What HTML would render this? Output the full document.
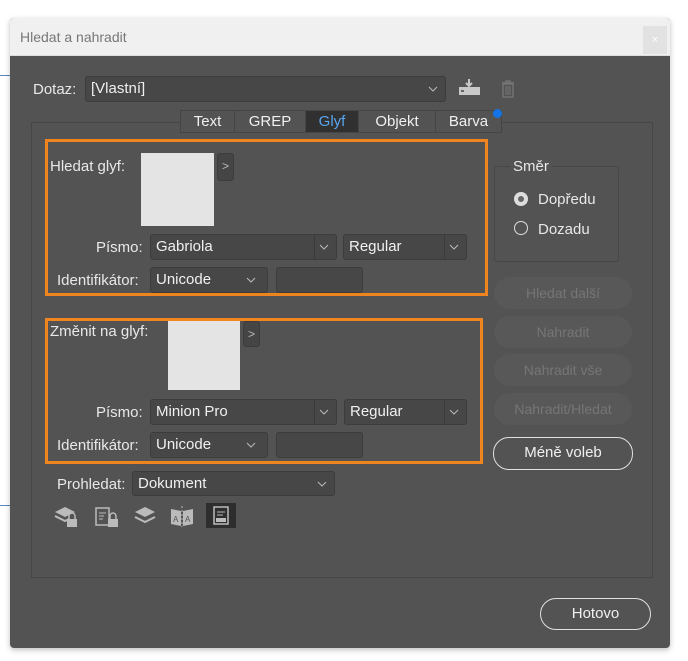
<!DOCTYPE html>
<html><head><meta charset="utf-8"><style>
*{box-sizing:border-box;margin:0;padding:0}
body{width:688px;height:661px;background:#fff;position:relative;overflow:hidden;font-family:"Liberation Sans",sans-serif;font-size:15px;color:#e8e8e8}
.a{position:absolute}
.dlg{left:10px;top:18px;width:660px;height:630px;background:#535353;border-radius:4px;box-shadow:0 2px 6px rgba(0,0,0,.25);overflow:hidden}
.title{left:0;top:0;width:660px;height:38px;background:#f0f0f0;color:#777;font-size:14px;line-height:38px;padding-left:10px;border-bottom:1px solid #ddd}
.lbl{white-space:nowrap;line-height:16px}
.dd{background:#474747;border:1px solid #3c3c3c;border-radius:3px;line-height:24px;padding-left:5px;color:#f0f0f0}
.dd .ch{position:absolute;right:7px;top:9px;width:10px;height:6px}
.div{position:absolute;top:0;bottom:0;width:1px;background:#3a3a3a}
.glyph{background:#e4e4e4}
.arr{background:#454545;border:1px solid #3c3c3c;border-radius:3px;color:#bbb;font-size:12px;text-align:center;line-height:24px}
.ob{border:3px solid #f0851f}
.btn{border-radius:16px;background:#585858;color:#767676;text-align:center;line-height:32px;font-size:14px}
.tab{top:110px;height:23px;border:1px solid #454545;background:#535353;text-align:center;line-height:22px;color:#f0f0f0}
</style></head><body>
<div class="a" style="left:0;top:75px;width:10px;height:1px;background:#5b86b8"></div>
<div class="a" style="left:0;top:505px;width:10px;height:1px;background:#5b86b8"></div>
<div class="a dlg">
<div class="a title">Hledat a nahradit</div>
<div class="a" style="left:633px;top:8px;width:24px;height:28px;background:#e2e2e2;color:#fff;font-size:11px;text-align:center;line-height:28px">×</div>
</div>
<div class="a lbl" style="left:33px;top:82px">Dotaz:</div>
<div class="a dd" style="left:85px;top:76px;width:361px;height:26px">[Vlastní]<svg class="ch" viewBox="0 0 10 6"><path d="M1 1l4 4 4-4" stroke="#bbb" fill="none"/></svg></div>
<svg class="a" style="left:458px;top:77px" width="24" height="22"><rect x="1" y="10" width="21" height="8" fill="#c8c8c8"/><rect x="3" y="13" width="3" height="2" fill="#666"/><path d="M11 2v7M8 6l3 3 3-3" stroke="#c8c8c8" stroke-width="2" fill="none"/></svg>
<svg class="a" style="left:500px;top:79px" width="16" height="20"><path d="M2 4h12M6 4V2h4v2M3 5h10v13H3z" stroke="#777" stroke-width="1.3" fill="none"/><path d="M6 7v9M8 7v9M10 7v9" stroke="#777"/></svg>
<div class="a" style="left:31px;top:122px;width:622px;height:456px;border:1px solid #474747"></div>
<div class="a tab" style="left:180px;width:55px">Text</div>
<div class="a tab" style="left:234px;width:72px">GREP</div>
<div class="a tab" style="left:305px;width:54px;background:#303030;color:#58a6f0">Glyf</div>
<div class="a tab" style="left:358px;width:78px">Objekt</div>
<div class="a tab" style="left:435px;width:67px">Barva</div>
<div class="a" style="left:493px;top:109px;width:9px;height:9px;border-radius:50%;background:#1473e6"></div>

<div class="a ob" style="left:45px;top:139px;width:443px;height:157px"></div>
<div class="a lbl" style="left:50px;top:159px">Hledat glyf:</div>
<div class="a glyph" style="left:141px;top:153px;width:73px;height:73px"></div>
<div class="a arr" style="left:217px;top:153px;width:17px;height:28px">&gt;</div>
<div class="a lbl" style="left:96px;top:240px">Písmo:</div>
<div class="a dd" style="left:150px;top:234px;width:187px;height:26px">Gabriola<span class="div" style="left:163px"></span><svg class="ch" viewBox="0 0 10 6"><path d="M1 1l4 4 4-4" stroke="#bbb" fill="none"/></svg></div>
<div class="a dd" style="left:343px;top:234px;width:124px;height:26px">Regular<span class="div" style="left:100px"></span><svg class="ch" viewBox="0 0 10 6"><path d="M1 1l4 4 4-4" stroke="#bbb" fill="none"/></svg></div>
<div class="a lbl" style="left:57px;top:273px">Identifikátor:</div>
<div class="a dd" style="left:150px;top:267px;width:118px;height:26px">Unicode<svg class="ch" style="right:11px" viewBox="0 0 10 6"><path d="M1 1l4 4 4-4" stroke="#bbb" fill="none"/></svg></div>
<div class="a dd" style="left:276px;top:267px;width:87px;height:26px"></div>

<div class="a ob" style="left:45px;top:318px;width:438px;height:146px"></div>
<div class="a lbl" style="left:50px;top:324px">Změnit na glyf:</div>
<div class="a glyph" style="left:168px;top:321px;width:72px;height:69px"></div>
<div class="a arr" style="left:243px;top:321px;width:17px;height:26px">&gt;</div>
<div class="a lbl" style="left:96px;top:405px">Písmo:</div>
<div class="a dd" style="left:150px;top:399px;width:187px;height:26px">Minion Pro<span class="div" style="left:163px"></span><svg class="ch" viewBox="0 0 10 6"><path d="M1 1l4 4 4-4" stroke="#bbb" fill="none"/></svg></div>
<div class="a dd" style="left:344px;top:399px;width:123px;height:26px">Regular<span class="div" style="left:99px"></span><svg class="ch" viewBox="0 0 10 6"><path d="M1 1l4 4 4-4" stroke="#bbb" fill="none"/></svg></div>
<div class="a lbl" style="left:57px;top:438px">Identifikátor:</div>
<div class="a dd" style="left:150px;top:432px;width:118px;height:26px">Unicode<svg class="ch" style="right:11px" viewBox="0 0 10 6"><path d="M1 1l4 4 4-4" stroke="#bbb" fill="none"/></svg></div>
<div class="a dd" style="left:276px;top:432px;width:87px;height:26px"></div>

<div class="a" style="left:494px;top:166px;width:125px;height:96px;border:1px solid #474747;border-radius:3px"></div>
<div class="a lbl" style="left:510px;top:159px;background:#535353;padding:0 3px">Směr</div>
<div class="a" style="left:514px;top:192px;width:14px;height:14px;border-radius:50%;background:#ddd"></div>
<div class="a" style="left:518px;top:196px;width:6px;height:6px;border-radius:50%;background:#666"></div>
<div class="a lbl" style="left:538px;top:192px">Dopředu</div>
<div class="a" style="left:514px;top:221px;width:14px;height:14px;border-radius:50%;border:1px solid #ddd"></div>
<div class="a lbl" style="left:538px;top:222px">Dozadu</div>
<div class="a btn" style="left:494px;top:277px;width:138px;height:32px">Hledat další</div>
<div class="a btn" style="left:494px;top:316px;width:138px;height:32px">Nahradit</div>
<div class="a btn" style="left:494px;top:354px;width:138px;height:32px">Nahradit vše</div>
<div class="a btn" style="left:494px;top:393px;width:138px;height:32px">Nahradit/Hledat</div>
<div class="a btn" style="left:493px;top:437px;width:140px;height:33px;background:none;border:1.5px solid #e0e0e0;color:#f0f0f0;line-height:30px;font-size:15px">Méně voleb</div>

<div class="a lbl" style="left:57px;top:477px">Prohledat:</div>
<div class="a dd" style="left:132px;top:471px;width:203px;height:25px;line-height:23px">Dokument<svg class="ch" viewBox="0 0 10 6"><path d="M1 1l4 4 4-4" stroke="#bbb" fill="none"/></svg></div>
<svg class="a" style="left:54px;top:506px" width="24" height="22"><path d="M1 6l10-5 10 5-10 5z" fill="#bbb"/><path d="M1 10l10 5 4-2" stroke="#bbb" stroke-width="2" fill="none"/><rect x="13" y="13" width="10" height="8" fill="#bbb"/><path d="M15 13v-3a3 3 0 0 1 6 0v3" stroke="#bbb" stroke-width="1.5" fill="none"/></svg>
<svg class="a" style="left:95px;top:506px" width="24" height="22"><rect x="1" y="2" width="13" height="17" fill="none" stroke="#bbb" stroke-width="1.5"/><path d="M4 7h7M4 10h5M4 13h4" stroke="#bbb"/><rect x="13" y="13" width="10" height="8" fill="#bbb"/><path d="M15 13v-3a3 3 0 0 1 6 0v3" stroke="#bbb" stroke-width="1.5" fill="none"/></svg>
<svg class="a" style="left:134px;top:506px" width="22" height="20"><path d="M1 6l10-5 10 5-10 5z" fill="#bbb"/><path d="M1 11l10 5 10-5" stroke="#bbb" stroke-width="2" fill="none"/></svg>
<svg class="a" style="left:170px;top:505px" width="24" height="22"><path d="M1 4l10 2v15l-10-2zM23 4l-10 2v15l10-2z" fill="#bbb"/><path d="M12 1v21" stroke="#bbb" stroke-dasharray="2 2"/><text x="3" y="17" font-size="8" fill="#555" font-family="Liberation Sans">A</text><text x="15" y="17" font-size="8" fill="#555" font-family="Liberation Sans">A</text></svg>
<div class="a" style="left:206px;top:503px;width:30px;height:25px;background:#2e2e2e"></div>
<svg class="a" style="left:213px;top:506px" width="16" height="19"><rect x="1" y="1" width="14" height="17" fill="none" stroke="#bbb" stroke-width="1.5"/><path d="M4 6h8M4 9h6" stroke="#bbb"/><rect x="3" y="12" width="10" height="4" fill="#bbb"/></svg>

<div class="a btn" style="left:540px;top:598px;width:111px;height:32px;background:none;border:1.5px solid #e0e0e0;color:#f0f0f0;line-height:29px;font-size:15px">Hotovo</div>
</body></html>
